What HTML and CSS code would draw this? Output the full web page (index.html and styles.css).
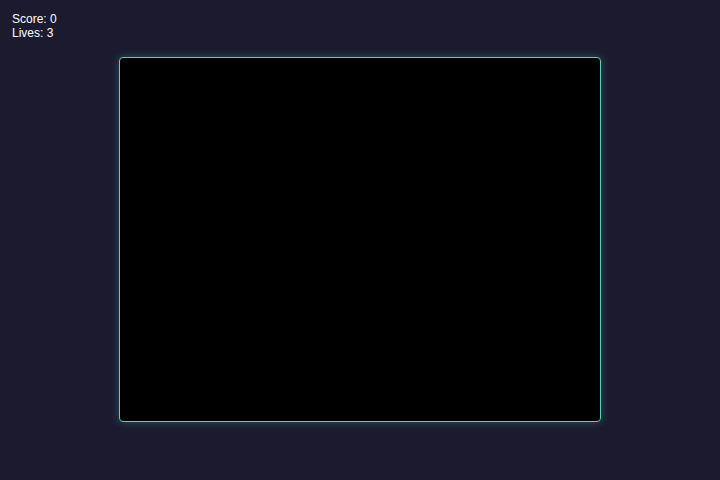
FILE: index.html
```html
<!DOCTYPE html>
<html>
<head>
<meta charset="utf-8">
<link rel="stylesheet" href="styles.css">
</head>
<body>
<div class="hud">
  <div class="hud-line">Score: 0</div>
  <div class="hud-line">Lives: 3</div>
</div>
<main class="stage">
  <div class="game-canvas"></div>
</main>
</body>
</html>
```
FILE: styles.css
```css
html, body {
  margin: 0;
  padding: 0;
  height: 100%;
}
body {
  background: #1b1a2e;
  font-family: "Liberation Sans", Arial, sans-serif;
  color: #ffffff;
  overflow: hidden;
}
.hud {
  position: absolute;
  top: 12px;
  left: 12px;
  font-size: 12px;
  line-height: 14px;
}
.stage {
  height: 100%;
  display: flex;
  justify-content: center;
  align-items: flex-start;
  padding-top: 57px;
  box-sizing: border-box;
}
.game-canvas {
  width: 480px;
  height: 363px;
  background: #000000;
  border: 1px solid #5fd0b8;
  border-radius: 4px;
  box-shadow: 0 0 10px rgba(95, 208, 184, 0.3);
}
```
